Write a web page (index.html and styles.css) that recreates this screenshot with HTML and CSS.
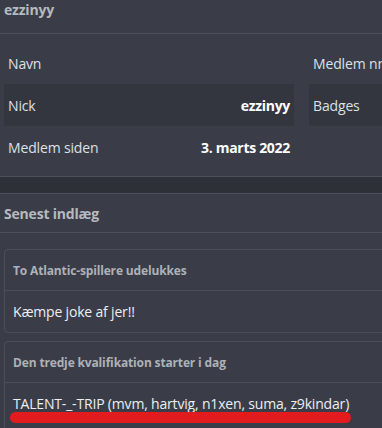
FILE: index.html
```html
<!DOCTYPE html>
<html lang="da">
<head>
<meta charset="utf-8">
<link rel="stylesheet" href="styles.css">
</head>
<body>
<div class="page">
  <section class="panel">
    <div class="panel-head first">ezzinyy</div>
    <div class="info">
      <div class="col left">
        <div class="row"><span>Navn</span><b></b></div>
        <div class="row alt"><span>Nick</span><b>ezzinyy</b></div>
        <div class="row"><span>Medlem siden</span><b>3. marts 2022</b></div>
      </div>
      <div class="col right">
        <div class="row"><span>Medlem nr</span></div>
        <div class="row alt"><span>Badges</span></div>
      </div>
    </div>
  </section>
  <section class="panel second">
    <div class="panel-head">Senest indlæg</div>
    <div class="posts">
      <div class="card">
        <div class="card-title">To Atlantic-spillere udelukkes</div>
        <div class="card-body">Kæmpe joke af jer!!</div>
      </div>
      <div class="card">
        <div class="card-title">Den tredje kvalifikation starter i dag</div>
        <div class="card-body marked"><span class="txt">TALENT-_-TRIP (mvm, hartvig, n1xen, suma, z9kindar)</span><span class="redline"></span></div>
      </div>
    </div>
  </section>
</div>
</body>
</html>
```
FILE: styles.css
```css
html, body {
  margin: 0;
  padding: 0;
  background: #2d3037;
  overflow: hidden;
}
body {
  font-family: "Open Sans", "Noto Sans", sans-serif;
  color: #dfe2e8;
}
.page {
  width: 440px;
}
.panel {
  background: #3a3d47;
  border-bottom: 1px solid #4c505a;
}
.panel.second {
  margin-top: 16px;
  border-top: 1px solid #4c505a;
  border-bottom: none;
}
.panel-head {
  height: 38px;
  padding: 0 4px;
  display: flex;
  align-items: center;
  font-size: 14px;
  font-weight: 700;
  color: #b6b9bf;
  letter-spacing: -0.2px;
  border-bottom: 1px solid #4c505a;
}
.panel-head.first {
  height: 33px;
  align-items: flex-start;
  line-height: 20px;
}
.info {
  display: flex;
  gap: 15px;
  padding: 8px 4px;
}
.col.left {
  width: 290px;
}
.col.right {
  flex: 1;
}
.row {
  height: 42px;
  display: flex;
  align-items: center;
  justify-content: space-between;
  padding: 0 4px;
  font-size: 14px;
  letter-spacing: -0.15px;
  color: #dce0e7;
}
.row.alt {
  background: #33363f;
}
.row b {
  font-weight: 700;
  color: #ffffff;
  letter-spacing: -0.3px;
}
.posts {
  padding: 16px 0 0 4px;
  display: flex;
  flex-direction: column;
  gap: 8px;
}
.card {
  border: 1px solid #4a4e58;
  border-radius: 4px;
}
.card-title {
  height: 40px;
  padding: 0 8px;
  display: flex;
  align-items: center;
  font-size: 12px;
  font-weight: 700;
  color: #aeb1b7;
  letter-spacing: -0.15px;
  border-bottom: 1px solid #4a4e58;
}
.card-body {
  height: 41px;
  padding: 0 8px;
  display: flex;
  align-items: center;
  font-size: 14px;
  letter-spacing: -0.18px;
  color: #eceef2;
}
.card-body.marked {
  position: relative;
  height: 44px;
  align-items: flex-start;
  padding-top: 11px;
  line-height: 19px;
}
.redline {
  position: absolute;
  left: 5px;
  top: 29px;
  width: 341px;
  height: 11px;
  border-radius: 6px;
  background: #e11b1e;
}
```
